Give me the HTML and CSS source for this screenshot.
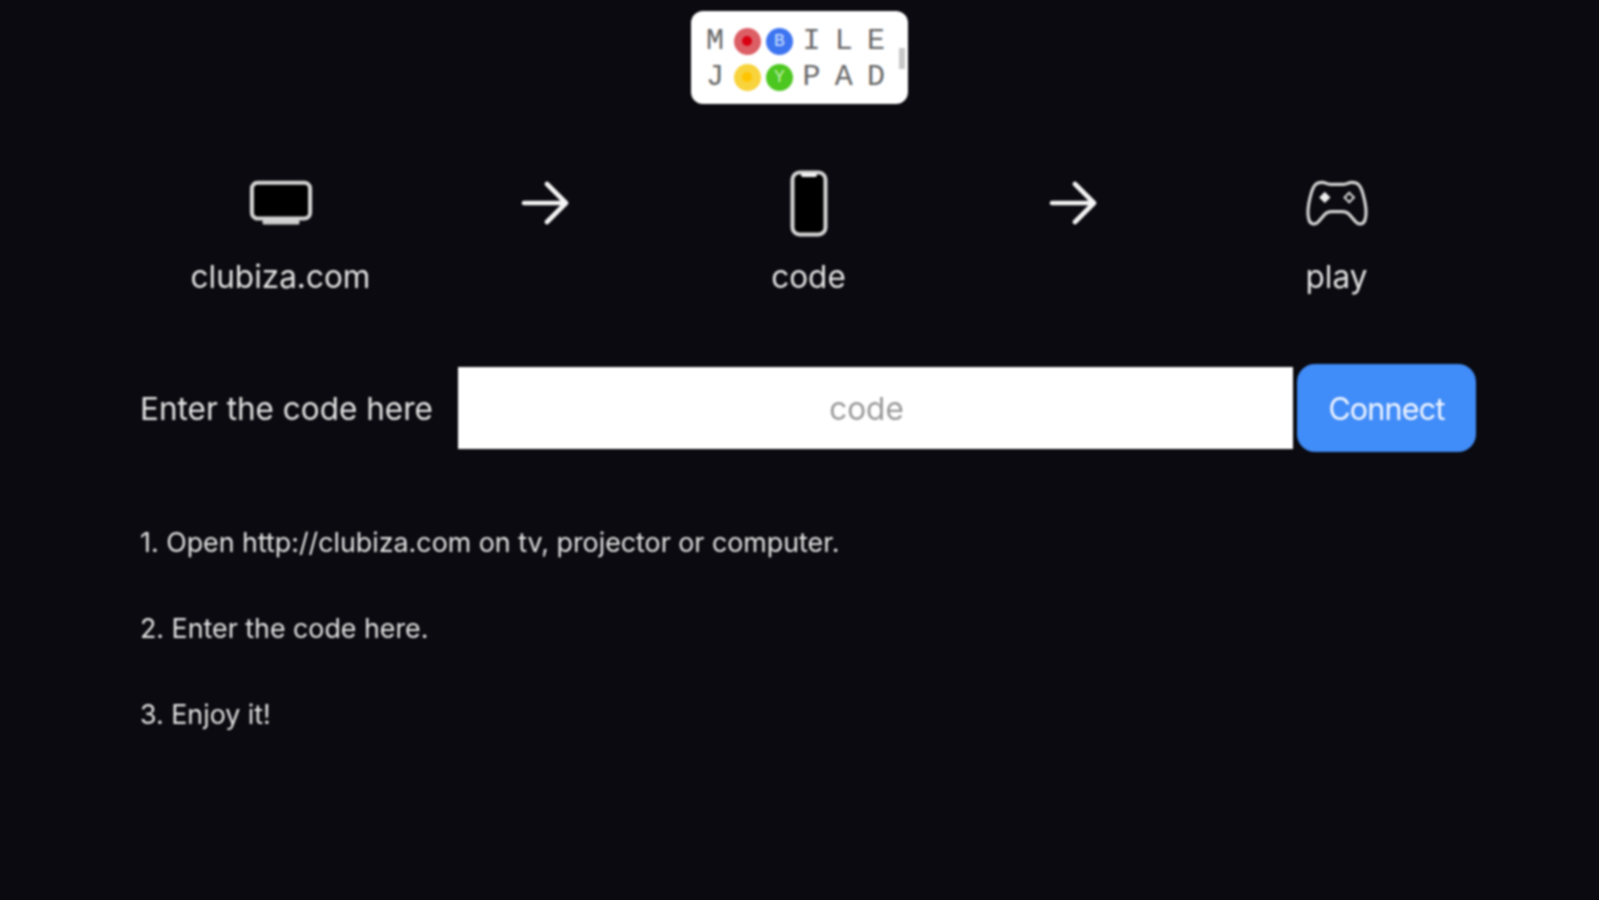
FILE: index.html
```html
<!DOCTYPE html>
<html lang="en">
<head>
<meta charset="utf-8">
<title>Mobile Joypad</title>
<link rel="stylesheet" href="styles.css">
</head>
<body>
<main class="page">
  <div class="logo">
    <span class="ch">M</span><span class="dot red"><i class="core dark-red"></i></span><span class="dot blue">B</span><span class="ch">I</span><span class="ch">L</span><span class="ch">E</span>
    <span class="ch">J</span><span class="dot yellow"><i class="core orange"></i></span><span class="dot green">Y</span><span class="ch">P</span><span class="ch">A</span><span class="ch">D</span>
    <span class="tick"></span>
  </div>

  <section class="flow">
    <div class="step">
      <svg class="icon" width="64" height="52" viewBox="0 1 66 52">
        <rect x="3" y="4" width="60" height="37" rx="6" fill="#000" stroke="#d4d4d4" stroke-width="4.2"/>
        <rect x="14" y="42" width="38" height="5" rx="1" fill="#cfcfcf"/>
      </svg>
      <span class="label">clubiza.com</span>
    </div>
    <div class="step">
      <svg class="icon" width="48" height="48" viewBox="0 2 48 48">
        <path d="M3 24H44M26 5L45 24L26 43" fill="none" stroke="#f4f4f4" stroke-width="4.6" stroke-linecap="round" stroke-linejoin="round"/>
      </svg>
    </div>
    <div class="step">
      <svg class="icon" width="38" height="68" viewBox="0 1 38 68">
        <rect x="2.5" y="2.5" width="33" height="62" rx="7" fill="#000" stroke="#d4d4d4" stroke-width="4"/>
        <rect x="11" y="3" width="16" height="4" rx="2" fill="#f0f0f0"/>
      </svg>
      <span class="label">code</span>
    </div>
    <div class="step">
      <svg class="icon" width="48" height="48" viewBox="0 2 48 48">
        <path d="M3 24H44M26 5L45 24L26 43" fill="none" stroke="#f4f4f4" stroke-width="4.6" stroke-linecap="round" stroke-linejoin="round"/>
      </svg>
    </div>
    <div class="step">
      <svg class="icon" width="62" height="52" viewBox="0 2 66 52">
        <path d="M17 4C10 4 8 8 6 14C3 24 1 36 3 43C4 48 9 50 13 46L20 38C22 36 24 35 27 35H39C42 35 44 36 46 38L53 46C57 50 62 48 63 43C65 36 63 24 60 14C58 8 56 4 49 4C45 4 43 6 39 6H27C23 6 21 4 17 4Z" fill="none" stroke="#d4d4d4" stroke-width="3.4" stroke-linejoin="round"/>
        <path d="M20 14L26 20L20 26L14 20Z" fill="#f0f0f0"/>
        <path d="M46 15L51 20L46 25L41 20Z" fill="none" stroke="#d4d4d4" stroke-width="2.2"/>
      </svg>
      <span class="label">play</span>
    </div>
  </section>

  <form class="code-row">
    <label class="code-label" for="code">Enter the code here</label>
    <input class="code-input" id="code" type="text" placeholder="code">
    <button class="connect" type="button">Connect</button>
  </form>

  <ol class="help">
    <li>1. Open http://clubiza.com on tv, projector or computer.</li>
    <li>2. Enter the code here.</li>
    <li>3. Enjoy it!</li>
  </ol>
</main>
</body>
</html>
```
FILE: styles.css
```css
* { box-sizing: border-box; }
html, body { margin: 0; height: 100%; background: #0a0a10; overflow: hidden; }
body { font-family: Inter, "Liberation Sans", sans-serif; color: #e4e4e4; }

.page {
  height: 900px;
  padding: 11px 122px 0 140px;
  display: flex;
  flex-direction: column;
  filter: blur(0.9px);
}

.logo {
  position: relative;
  align-self: center;
  margin-right: 18px;
  width: 217px;
  height: 93px;
  padding: 12px 16px 8px 8px;
  background: #fff;
  border-radius: 12px;
  display: grid;
  grid-template-columns: repeat(6, 1fr);
  grid-template-rows: repeat(2, 36px);
  align-items: center;
  justify-items: center;
  font-family: "Liberation Mono", monospace;
  font-size: 30px;
  color: #666;
}
.ch { line-height: 1; }
.dot {
  width: 27px;
  height: 27px;
  border-radius: 50%;
  display: flex;
  align-items: center;
  justify-content: center;
  font-size: 18px;
  color: #cfe0ff;
}
.core { width: 10px; height: 10px; border-radius: 50%; }
.red { background: #dc5f66; }
.dark-red { background: #d90012; }
.blue { background: #3d74f0; }
.yellow { background: #f8d33c; }
.orange { background: #ffc400; }
.green { background: #4cc71f; color: #c6f0b4; }
.tick {
  position: absolute;
  right: 3px;
  top: 37px;
  width: 6px;
  height: 21px;
  background: #c8c8c8;
}

.flow {
  margin-top: 66px;
  align-self: center;
  display: grid;
  grid-template-columns: repeat(5, 264px);
  height: 128px;
}
.step {
  display: flex;
  flex-direction: column;
  align-items: center;
}
.icon { height: 70px; flex: none; }
.label {
  margin-top: 19px;
  font-size: 31.5px;
  line-height: 36px;
}

.code-row {
  margin-top: 66px;
  display: flex;
  align-items: center;
}
.code-label {
  width: 318px;
  font-size: 31.5px;
}
.code-input {
  width: 835px;
  height: 82px;
  padding: 0 18px 0 0;
  border: 0;
  border-radius: 0;
  background: #fff;
  font: 31.5px Inter, "Liberation Sans", sans-serif;
  text-align: center;
}
.code-input::placeholder { color: #999; opacity: 1; }
.connect {
  margin-left: 4px;
  width: 179px;
  height: 88px;
  border: 0;
  border-radius: 18px;
  background: #408cf8;
  color: #f2f6ff;
  font: 30.5px Inter, "Liberation Sans", sans-serif;
  letter-spacing: -0.8px;
}

.help {
  list-style: none;
  margin: 74px 0 0;
  padding: 0;
  display: flex;
  flex-direction: column;
  gap: 54px;
  font-size: 26.8px;
  line-height: 32px;
}
```
